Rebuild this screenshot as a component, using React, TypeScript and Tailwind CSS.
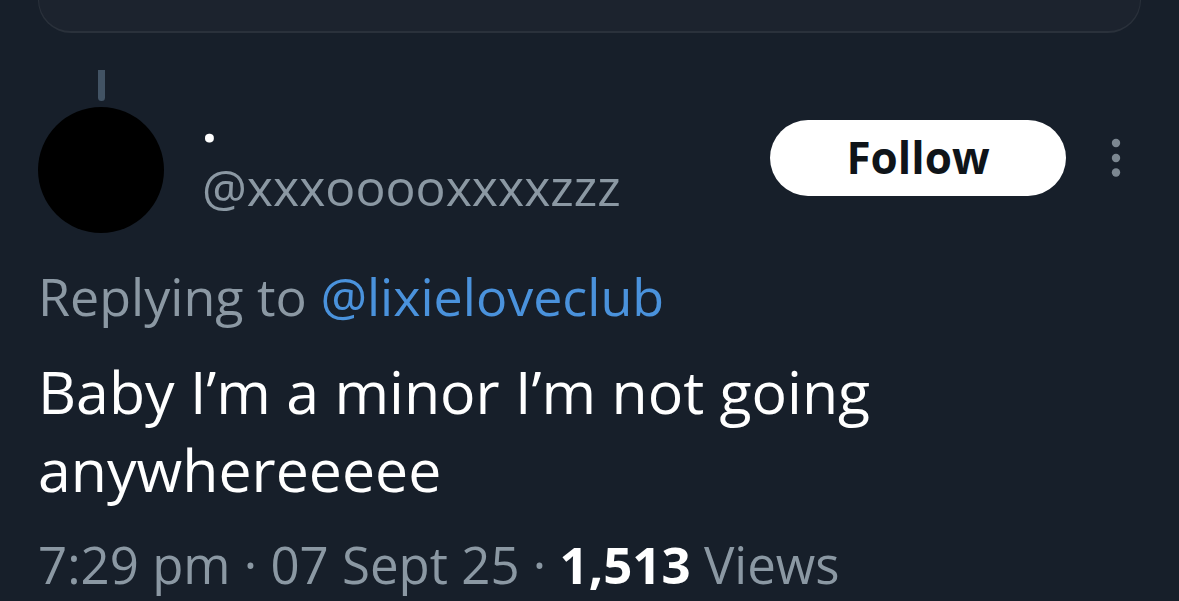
export default function App() {
  return (
    <main className="min-h-screen overflow-hidden bg-[#171f2a] px-[38px] font-['Open_Sans','Noto_Sans',sans-serif] text-white">
      <div className="h-[33px] rounded-b-[38px] border border-t-0 border-b-2 border-[#2a313b] bg-[#1c232e]" />
      <article>
        <div className="flex w-[126px] justify-center pt-[37px]">
          <span className="h-[31px] w-[7px] rounded-b-full bg-[#425364]" />
        </div>
        <header className="mt-[6px] flex items-start">
          <div className="size-[126px] shrink-0 rounded-full bg-black" />
          <div className="ml-[38px] min-w-0 flex-1">
            <p className="h-[48px] text-[52px] leading-[30px] font-bold">.</p>
            <p className="text-[50px] leading-[64px] text-[#8b98a3]">@xxxooooxxxxzzz</p>
          </div>
          <button className="mt-[13px] h-[76px] w-[296px] rounded-full bg-white pb-0.5 text-[44px] leading-[60px] font-bold text-[#0f1419]">
            Follow
          </button>
          <button aria-label="More options" className="mt-[29px] mr-[20px] ml-[45px]">
            <svg width="10" height="42" viewBox="0 0 10 42" fill="#7c8791">
              <circle cx="5" cy="7" r="4.2" />
              <circle cx="5" cy="22" r="4.2" />
              <circle cx="5" cy="36.5" r="4.2" />
            </svg>
          </button>
        </header>
        <p className="mt-[31px] text-[52px] leading-[64px] text-[#8b98a3]">
          Replying to <a href="#" className="text-[#4a92dc]">@lixieloveclub</a>
        </p>
        <p className="mt-[24px] text-[59px] leading-[78px]">
          Baby I’m a minor I’m not going
          <br />
          anywhereeeee
        </p>
        <p className="mt-[24px] text-[51px] leading-[64px] text-[#8b98a3]">
          7:29 pm · 07 Sept 25 · <strong className="font-bold text-white">1,513</strong> Views
        </p>
      </article>
    </main>
  );
}
